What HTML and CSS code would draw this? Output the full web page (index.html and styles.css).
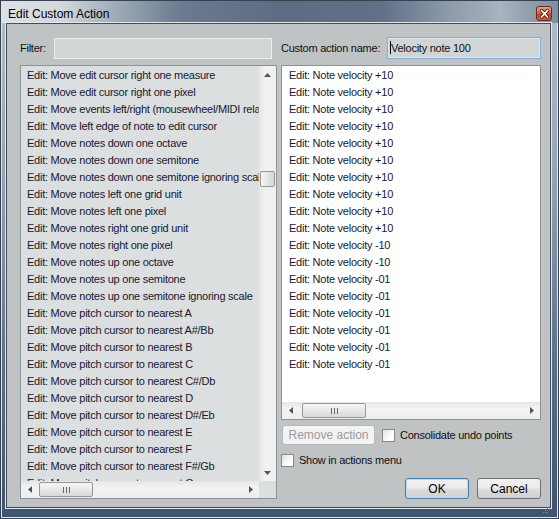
FILE: index.html
```html
<!DOCTYPE html>
<html>
<head>
<meta charset="utf-8">
<title>Edit Custom Action</title>
<link rel="stylesheet" href="styles.css">
</head>
<body>
<div class="window">
  <div class="titlebar">
    <span class="title">Edit Custom Action</span>
    <div class="close">
      <svg width="13" height="12" viewBox="0 0 13 12"><path d="M3.5 2.5 L9.5 9 M9.5 2.5 L3.5 9" stroke="#5a1a0c" stroke-width="3.4" stroke-linecap="round"/><path d="M3.5 2.5 L9.5 9 M9.5 2.5 L3.5 9" stroke="#ffffff" stroke-width="1.8" stroke-linecap="round"/></svg>
    </div>
  </div>
  <div class="frame-body">
    <div class="client">
      <div class="col">
        <div class="field-row">
          <span class="lbl filter-lbl">Filter:</span>
          <div class="input filter-input"></div>
        </div>
        <div class="listbox lb-left">
          <div class="lb-items">
            <div class="item">Edit: Move edit cursor right one measure</div>
            <div class="item">Edit: Move edit cursor right one pixel</div>
            <div class="item">Edit: Move events left/right (mousewheel/MIDI relative)</div>
            <div class="item">Edit: Move left edge of note to edit cursor</div>
            <div class="item">Edit: Move notes down one octave</div>
            <div class="item">Edit: Move notes down one semitone</div>
            <div class="item">Edit: Move notes down one semitone ignoring scale</div>
            <div class="item">Edit: Move notes left one grid unit</div>
            <div class="item">Edit: Move notes left one pixel</div>
            <div class="item">Edit: Move notes right one grid unit</div>
            <div class="item">Edit: Move notes right one pixel</div>
            <div class="item">Edit: Move notes up one octave</div>
            <div class="item">Edit: Move notes up one semitone</div>
            <div class="item">Edit: Move notes up one semitone ignoring scale</div>
            <div class="item">Edit: Move pitch cursor to nearest A</div>
            <div class="item">Edit: Move pitch cursor to nearest A#/Bb</div>
            <div class="item">Edit: Move pitch cursor to nearest B</div>
            <div class="item">Edit: Move pitch cursor to nearest C</div>
            <div class="item">Edit: Move pitch cursor to nearest C#/Db</div>
            <div class="item">Edit: Move pitch cursor to nearest D</div>
            <div class="item">Edit: Move pitch cursor to nearest D#/Eb</div>
            <div class="item">Edit: Move pitch cursor to nearest E</div>
            <div class="item">Edit: Move pitch cursor to nearest F</div>
            <div class="item">Edit: Move pitch cursor to nearest F#/Gb</div>
            <div class="item">Edit: Move pitch cursor to nearest G</div>
          </div>
          <div class="vscroll">
            <div class="sb-btn"><svg width="7" height="4" viewBox="0 0 7 4"><path d="M0 4 L3.5 0 L7 4 Z" fill="#555"/></svg></div>
            <div class="vtrack"><div class="vthumb"></div></div>
            <div class="sb-btn"><svg width="7" height="4" viewBox="0 0 7 4"><path d="M0 0 L3.5 4 L7 0 Z" fill="#555"/></svg></div>
          </div>
          <div class="hscroll">
            <div class="sb-btn"><svg width="4" height="7" viewBox="0 0 4 7"><path d="M4 0 L0 3.5 L4 7 Z" fill="#555"/></svg></div>
            <div class="htrack"><div class="hthumb thumb-left"><svg width="7" height="6" viewBox="0 0 7 6"><rect x="0" y="0" width="1" height="6" fill="#6b6b6b"/><rect x="3" y="0" width="1" height="6" fill="#6b6b6b"/><rect x="6" y="0" width="1" height="6" fill="#6b6b6b"/></svg></div></div>
            <div class="sb-btn"><svg width="4" height="7" viewBox="0 0 4 7"><path d="M0 0 L4 3.5 L0 7 Z" fill="#555"/></svg></div>
          </div>
          <div class="corner"></div>
        </div>
      </div>

      <div class="col">
        <div class="field-row">
          <span class="lbl name-lbl">Custom action name:</span>
          <div class="input name-input"><span class="caret"></span>Velocity note 100</div>
        </div>
        <div class="listbox lb-right">
          <div class="lb-items">
            <div class="item">Edit: Note velocity +10</div>
            <div class="item">Edit: Note velocity +10</div>
            <div class="item">Edit: Note velocity +10</div>
            <div class="item">Edit: Note velocity +10</div>
            <div class="item">Edit: Note velocity +10</div>
            <div class="item">Edit: Note velocity +10</div>
            <div class="item">Edit: Note velocity +10</div>
            <div class="item">Edit: Note velocity +10</div>
            <div class="item">Edit: Note velocity +10</div>
            <div class="item">Edit: Note velocity +10</div>
            <div class="item">Edit: Note velocity -10</div>
            <div class="item">Edit: Note velocity -10</div>
            <div class="item">Edit: Note velocity -01</div>
            <div class="item">Edit: Note velocity -01</div>
            <div class="item">Edit: Note velocity -01</div>
            <div class="item">Edit: Note velocity -01</div>
            <div class="item">Edit: Note velocity -01</div>
            <div class="item">Edit: Note velocity -01</div>
          </div>
          <div class="hscroll">
            <div class="sb-btn"><svg width="4" height="7" viewBox="0 0 4 7"><path d="M4 0 L0 3.5 L4 7 Z" fill="#555"/></svg></div>
            <div class="htrack"><div class="hthumb thumb-right"><svg width="7" height="6" viewBox="0 0 7 6"><rect x="0" y="0" width="1" height="6" fill="#6b6b6b"/><rect x="3" y="0" width="1" height="6" fill="#6b6b6b"/><rect x="6" y="0" width="1" height="6" fill="#6b6b6b"/></svg></div></div>
            <div class="sb-btn"><svg width="4" height="7" viewBox="0 0 4 7"><path d="M0 0 L4 3.5 L0 7 Z" fill="#555"/></svg></div>
          </div>
        </div>
        <div class="row row-remove">
          <div class="btn btn-disabled">Remove action</div>
          <div class="check"></div>
          <span class="lbl">Consolidate undo points</span>
        </div>
        <div class="row row-show">
          <div class="check check-first"></div>
          <span class="lbl">Show in actions menu</span>
        </div>
        <div class="row row-buttons">
          <div class="btn btn-default">OK</div>
          <div class="btn">Cancel</div>
        </div>
      </div>

      <div class="grip">
        <svg width="7" height="7" viewBox="0 0 7 7"><rect x="5" y="1" width="1" height="1" fill="#8a8e92"/><rect x="3" y="3" width="1" height="1" fill="#8a8e92"/><rect x="5" y="3" width="1" height="1" fill="#8a8e92"/><rect x="1" y="5" width="1" height="1" fill="#8a8e92"/><rect x="3" y="5" width="1" height="1" fill="#8a8e92"/><rect x="5" y="5" width="1" height="1" fill="#8a8e92"/></svg>
      </div>
    </div>
  </div>
</div>
</body>
</html>
```

FILE: styles.css
```css
html, body {
  margin: 0;
  padding: 0;
}
body {
  width: 559px;
  height: 519px;
  overflow: hidden;
  font-family: "Liberation Sans", Arial, sans-serif;
  background: #ffffff;
}

.window {
  box-sizing: border-box;
  width: 559px;
  height: 519px;
  border: 1px solid #36424f;
  background: linear-gradient(180deg, #b3bdc8 0%, #93a2b3 35%, #5a6f8a 70%, #3f556f 100%);
  box-shadow: inset 0 0 0 1px #dfe5eb;
  display: flex;
  flex-direction: column;
}

.titlebar {
  height: 22px;
  flex: none;
  display: flex;
  align-items: flex-start;
  padding-left: 7px;
  background: linear-gradient(90deg, #dde1e5 0px, #d3d8dd 60px, #9aa7b5 120px, #6a7b90 180px, #5b6c84 280px, #5f7088 380px, #8e9bab 450px, #aab3bf 500px, #93a0b0 525px, #7f8ea0 557px);
}
.title {
  font-size: 12px;
  line-height: 12px;
  margin-top: 7px;
  color: #000;
}
.close {
  margin-left: auto;
  margin-right: 6px;
  margin-top: 5px;
  box-sizing: border-box;
  width: 16px;
  height: 15px;
  border: 1px solid #6b2b1c;
  border-radius: 3px;
  background: linear-gradient(180deg, #e9a28c 0%, #d8684a 45%, #c2472a 55%, #cf5a37 100%);
  display: flex;
  align-items: center;
  justify-content: center;
}

.frame-body {
  flex: 1;
  padding: 0 7px 10px 5px;
}

.client {
  box-sizing: border-box;
  width: 545px;
  height: 485px;
  border: 1px solid #434b57;
  box-shadow: 0 0 0 1px #e3e8ed;
  background: #bfc3c3;
  padding: 13px 9px 0 13px;
  display: grid;
  grid-template-columns: 257px 260px;
  column-gap: 4px;
  align-items: start;
  position: relative;
}

.col {
  display: flex;
  flex-direction: column;
}

.lbl {
  font-size: 11px;
  letter-spacing: -0.25px;
  color: #101010;
  white-space: nowrap;
}

.field-row {
  height: 22px;
  display: flex;
  align-items: center;
  margin-bottom: 6px;
}
.filter-lbl {
  width: 34px;
  flex: none;
}
.input {
  box-sizing: border-box;
  background: #d2d5d5;
}
.filter-input {
  width: 218px;
  height: 21px;
  margin-top: 1px;
  border: 1px solid #eef0f0;
}
.name-lbl {
  width: 106px;
  flex: none;
}
.name-input {
  width: 154px;
  height: 22px;
  border: 1px solid #86aedb;
  box-shadow: inset 0 0 0 1px #dde6ee;
  font-size: 11px;
  letter-spacing: -0.25px;
  color: #101010;
  display: flex;
  align-items: center;
  padding-left: 2px;
  padding-bottom: 1px;
}
.caret {
  display: inline-block;
  width: 1px;
  height: 13px;
  background: #000;
  margin-right: 0px;
}

.listbox {
  box-sizing: border-box;
  border: 1px solid #8d9298;
  display: grid;
  overflow: hidden;
}
.lb-left {
  height: 434px;
  background: #dcdfdf;
  grid-template-columns: 1fr 17px;
  grid-template-rows: 1fr 17px;
}
.lb-right {
  height: 355px;
  background: #ffffff;
  grid-template-columns: 1fr;
  grid-template-rows: 1fr 17px;
}
.lb-items {
  overflow: hidden;
  padding-top: 1px;
  min-width: 0;
  min-height: 0;
}
.lb-left .lb-items {
  padding-left: 6px;
}
.lb-right .lb-items {
  padding-left: 7px;
}
.item {
  height: 17px;
  line-height: 17px;
  font-size: 11px;
  letter-spacing: -0.25px;
  white-space: nowrap;
  color: #181830;
}

.vscroll {
  display: flex;
  flex-direction: column;
  background: linear-gradient(90deg, #e6e6e6, #f3f3f3 40%, #eeeeee);
}
.sb-btn {
  width: 17px;
  height: 17px;
  flex: none;
  display: flex;
  align-items: center;
  justify-content: center;
}
.vtrack {
  flex: 1;
}
.vthumb {
  box-sizing: border-box;
  margin: 88px 1px 0 1px;
  height: 16px;
  border: 1px solid #979797;
  border-radius: 2px;
  background: linear-gradient(90deg, #f6f6f6, #e6e6e6 50%, #d6d6d6);
}
.hscroll {
  display: flex;
  background: linear-gradient(180deg, #e6e6e6, #f3f3f3 40%, #eeeeee);
}
.htrack {
  flex: 1;
  display: flex;
}
.hthumb {
  box-sizing: border-box;
  height: 15px;
  margin-top: 1px;
  border: 1px solid #979797;
  border-radius: 2px;
  background: linear-gradient(180deg, #f6f6f6, #e8e8e8 50%, #d8d8d8);
  display: flex;
  align-items: center;
  justify-content: center;
}
.thumb-left {
  margin-left: 1px;
  width: 54px;
}
.thumb-right {
  margin-left: 3px;
  width: 64px;
}
.corner {
  background: #dcdfdf;
}

.row {
  display: flex;
  align-items: center;
}
.row-remove {
  margin-top: 5px;
  height: 20px;
}
.row-show {
  margin-top: 8px;
  height: 14px;
}
.row-buttons {
  margin-top: 11px;
  height: 21px;
  justify-content: flex-end;
  gap: 8px;
}

.btn {
  box-sizing: border-box;
  height: 21px;
  width: 64px;
  border: 1px solid #707070;
  border-radius: 3px;
  background: linear-gradient(180deg, #f2f2f2 0%, #ebebeb 48%, #dddddd 52%, #cfcfcf 100%);
  font-size: 12px;
  color: #000;
  display: flex;
  align-items: center;
  justify-content: center;
}
.btn-default {
  border-color: #3c7fb1;
  box-shadow: inset 0 0 0 1px #b9dff3;
}
.btn-disabled {
  width: 93px;
  height: 20px;
  margin-left: 1px;
  margin-right: 7px;
  border-color: #b5b9bc;
  background: #f3f3f3;
  color: #9a9a9a;
  font-size: 12px;
}

.check {
  box-sizing: border-box;
  width: 13px;
  height: 13px;
  flex: none;
  border: 1px solid #8a8a8a;
  background: linear-gradient(135deg, #e2e2e2, #ffffff 70%);
  margin-right: 5px;
}

.grip {
  position: absolute;
  right: 1px;
  bottom: 0px;
  width: 7px;
  height: 7px;
}
```
